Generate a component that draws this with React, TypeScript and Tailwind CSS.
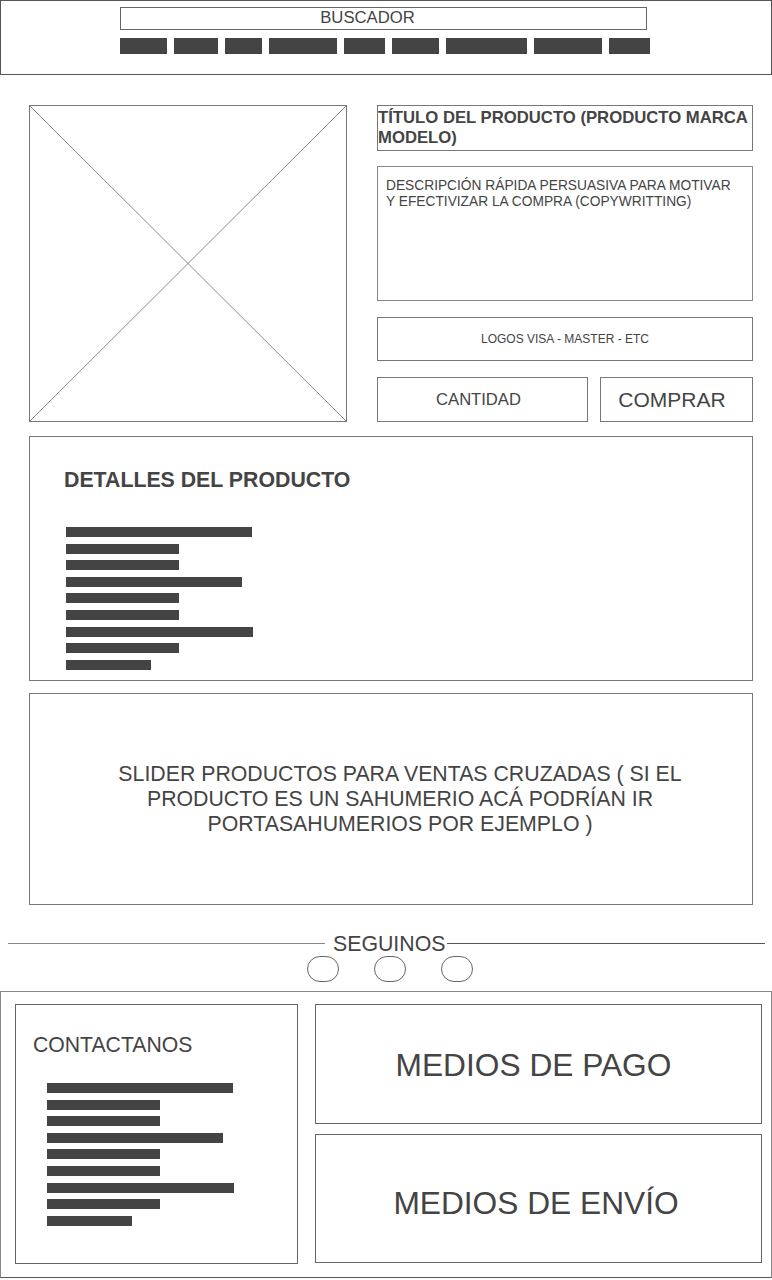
const navWidths = [47, 44, 37, 68, 41, 47, 81, 68, 41];
const barWidths = [186, 113, 113, 176, 113, 113, 187, 113, 85];

function Bars() {
  return (
    <div className="flex flex-col gap-[6.6px]">
      {barWidths.map((w, i) => (
        <div key={i} className="h-[10px] bg-[#444444]" style={{ width: w }} />
      ))}
    </div>
  );
}

export default function App() {
  return (
    <div
      className="relative w-[772px] h-[1280px] bg-white text-[#444444]"
      style={{ fontFamily: '"Liberation Sans", Arial, sans-serif' }}
    >
      {/* Header: buscador + menu */}
      <header className="h-[75px] border border-[#555555] pl-[119px] pt-[6px]">
        <div className="w-[527px] h-[23px] border border-[#666666] flex items-center justify-center pr-[32px] text-[16.7px] leading-none">
          BUSCADOR
        </div>
        <nav className="mt-[8px] flex gap-[7px]">
          {navWidths.map((w, i) => (
            <div key={i} className="h-[16px] bg-[#444444]" style={{ width: w }} />
          ))}
        </nav>
      </header>

      {/* Producto */}
      <section className="mt-[30px] ml-[29px] flex gap-[30px]">
        <div className="w-[318px] h-[317px] border border-[#777777]">
          <svg width="316" height="315" viewBox="0 0 316 315" className="block">
            <line x1="0" y1="0" x2="316" y2="315" stroke="#8a8a8a" strokeWidth="1" />
            <line x1="316" y1="0" x2="0" y2="315" stroke="#8a8a8a" strokeWidth="1" />
          </svg>
        </div>
        <div className="w-[376px] flex flex-col">
          <div className="h-[46px] border border-[#777777] pt-[2px] text-[16.7px] leading-[20px] font-bold">
            TÍTULO DEL PRODUCTO (PRODUCTO MARCA
            <br />
            MODELO)
          </div>
          <div className="mt-[15px] h-[135px] border border-[#888888] pl-[8px] pt-[11px] text-[13.75px] leading-[16px]">
            DESCRIPCIÓN RÁPIDA PERSUASIVA PARA MOTIVAR
            <br />
            Y EFECTIVIZAR LA COMPRA (COPYWRITTING)
          </div>
          <div className="mt-[16px] h-[44px] border border-[#777777] flex items-center justify-center text-[12px]">
            LOGOS VISA - MASTER - ETC
          </div>
          <div className="mt-[16px] flex gap-[12px]">
            <div className="w-[211px] h-[45px] border border-[#777777] flex items-center justify-center pr-[8px] pt-[2px] text-[16.6px]">
              CANTIDAD
            </div>
            <div className="flex-1 h-[45px] border border-[#777777] flex items-center justify-center pr-[9px] text-[21px]">
              COMPRAR
            </div>
          </div>
        </div>
      </section>

      {/* Detalles */}
      <section className="mt-[14px] ml-[29px] w-[724px] h-[245px] border border-[#777777] pl-[34px] pt-[31px]">
        <h2 className="text-[21.3px] leading-[24px] font-bold">DETALLES DEL PRODUCTO</h2>
        <div className="mt-[35px] ml-[2px]">
          <Bars />
        </div>
      </section>

      {/* Slider ventas cruzadas */}
      <section className="mt-[12px] ml-[29px] w-[724px] h-[212px] border border-[#777777] flex items-center justify-center pl-[18px] text-center text-[21.3px] leading-[25px]">
        <p>
          SLIDER PRODUCTOS PARA VENTAS CRUZADAS ( SI EL
          <br />
          PRODUCTO ES UN SAHUMERIO ACÁ PODRÍAN IR
          <br />
          PORTASAHUMERIOS POR EJEMPLO )
        </p>
      </section>

      {/* Seguinos */}
      <section className="mt-[27px] ml-[8px] w-[757px]">
        <div className="flex items-center h-[22px]">
          <div className="w-[317px] h-px bg-[#888888]" />
          <span className="pl-[8px] pr-[2px] pt-[4px] text-[21.3px] leading-none">SEGUINOS</span>
          <div className="flex-1 h-px bg-[#555555]" />
        </div>
        <div className="mt-[2px] ml-[299px] flex gap-[35px]">
          <div className="w-[32px] h-[26px] rounded-full border border-[#666666]" />
          <div className="w-[32px] h-[26px] rounded-full border border-[#666666]" />
          <div className="w-[32px] h-[26px] rounded-full border border-[#666666]" />
        </div>
      </section>

      {/* Footer */}
      <footer className="mt-[9px] h-[287px] border border-[#888888] border-b-[#555555] pl-[14px] pt-[12px] flex gap-[17px]">
        <div className="w-[283px] h-[260px] border border-[#666666] pl-[17px] pt-[28px]">
          <h3 className="text-[21.2px] leading-[24px]">CONTACTANOS</h3>
          <div className="mt-[26px] ml-[14px]">
            <Bars />
          </div>
        </div>
        <div className="w-[447px] flex flex-col gap-[10px]">
          <div className="h-[120px] border border-[#666666] flex items-center justify-center pr-[10px] pt-[3px] text-[31.7px]">
            MEDIOS DE PAGO
          </div>
          <div className="h-[129px] border border-[#666666] flex items-center justify-center pr-[5px] pt-[10px] text-[31.7px]">
            MEDIOS DE ENVÍO
          </div>
        </div>
      </footer>
    </div>
  );
}
